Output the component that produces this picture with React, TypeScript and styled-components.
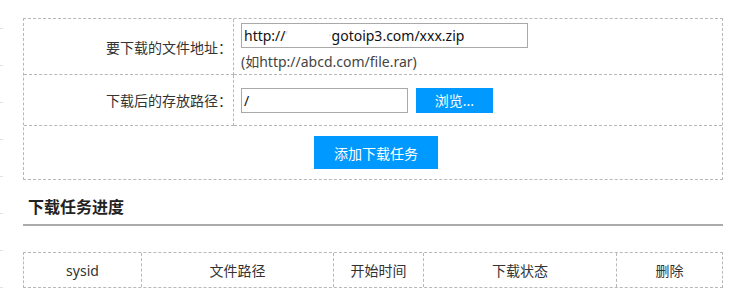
import React from "react";
import styled, { createGlobalStyle } from "styled-components";

const Global = createGlobalStyle`
  body {
    margin: 0;
    background: #fff;
    font-family: "Noto Sans", "Noto Sans CJK SC", sans-serif;
    color: #333;
  }
`;

const Page = styled.div`
  position: relative;
  width: 750px;
  height: 300px;
  overflow: hidden;
  padding: 18px 0 0 23px;
  box-sizing: border-box;
`;

const EdgeTicks = styled.div`
  position: absolute;
  left: 0;
  top: 0;
  width: 3px;
  height: 300px;
  background: repeating-linear-gradient(
    to bottom,
    transparent 0,
    transparent 28px,
    #e2e2e2 28px,
    #e2e2e2 29px,
    transparent 29px,
    transparent 37px
  );
`;

const FormTable = styled.div`
  width: 700px;
  box-sizing: border-box;
  display: grid;
  grid-template-columns: 210px 1fr;
  border: 1px dashed #b8b8b8;
`;

const Label = styled.div<{ $h: number }>`
  height: ${(p) => p.$h}px;
  box-sizing: border-box;
  display: flex;
  align-items: center;
  justify-content: flex-end;
  padding-right: 1px;
  font-size: 14px;
  color: #333;
  border-right: 1px dashed #b8b8b8;
  border-bottom: 1px dashed #b8b8b8;
`;

const Field = styled.div<{ $h: number }>`
  height: ${(p) => p.$h}px;
  box-sizing: border-box;
  display: flex;
  flex-direction: column;
  justify-content: center;
  gap: 3px;
  padding-left: 7px;
  border-bottom: 1px dashed #b8b8b8;
`;

const FieldRow = styled.div`
  display: flex;
  align-items: center;
  gap: 8px;
`;

const TextInput = styled.div<{ $w: number }>`
  width: ${(p) => p.$w}px;
  height: 25px;
  box-sizing: border-box;
  border: 1px solid #a9a9a9;
  font-size: 14px;
  color: #111;
  display: flex;
  align-items: center;
  padding-left: 2px;
  white-space: pre;
`;

const Hint = styled.div`
  font-size: 14px;
  color: #444;
`;

const BlueButton = styled.div<{ $w: number; $h: number }>`
  width: ${(p) => p.$w}px;
  height: ${(p) => p.$h}px;
  background: #0099ff;
  color: #fff;
  font-size: 14px;
  display: flex;
  align-items: center;
  justify-content: center;
`;

const ActionCell = styled.div`
  grid-column: 1 / span 2;
  height: 53px;
  box-sizing: border-box;
  display: flex;
  align-items: center;
  padding-left: 290px;
`;

const Heading = styled.h3`
  margin: 0;
  width: 700px;
  box-sizing: border-box;
  padding: 14px 0 0 5px;
  height: 46px;
  font-size: 16px;
  font-weight: bold;
  color: #222;
  border-bottom: 2px solid #aaa;
`;

const ListTable = styled.div`
  margin-top: 26px;
  width: 700px;
  box-sizing: border-box;
  display: grid;
  grid-template-columns: 118px 192px 90px 193px 1fr;
  border: 1px dashed #b8b8b8;
`;

const HeadCell = styled.div<{ $last?: boolean }>`
  height: 34px;
  display: flex;
  align-items: center;
  justify-content: center;
  font-size: 14px;
  color: #333;
  border-right: ${(p) => (p.$last ? "none" : "1px dashed #b8b8b8")};
`;

const Blur = styled.span`
  display: inline-flex;
  justify-content: space-between;
  width: 46px;
  color: #d8d8d8;
  font-size: 12px;
`;

export default function App() {
  const cols = ["sysid", "文件路径", "开始时间", "下载状态", "删除"];
  return (
    <>
      <Global />
      <Page>
        <EdgeTicks />
        <FormTable>
          <Label $h={56}>要下载的文件地址：</Label>
          <Field $h={56}>
            <TextInput $w={287}>
              {"http://"}
              <Blur>
                <span>ʻ</span>
                <span>·</span>
              </Blur>
              {"gotoip3.com/xxx.zip"}
            </TextInput>
            <Hint>(如http://abcd.com/file.rar)</Hint>
          </Field>
          <Label $h={51}>下载后的存放路径：</Label>
          <Field $h={51}>
            <FieldRow>
              <TextInput $w={167}>/</TextInput>
              <BlueButton $w={77} $h={25}>浏览...</BlueButton>
            </FieldRow>
          </Field>
          <ActionCell>
            <BlueButton $w={124} $h={33}>添加下载任务</BlueButton>
          </ActionCell>
        </FormTable>
        <Heading>下载任务进度</Heading>
        <ListTable>
          {cols.map((c, i) => (
            <HeadCell key={c} $last={i === cols.length - 1}>
              {c}
            </HeadCell>
          ))}
        </ListTable>
      </Page>
    </>
  );
}
